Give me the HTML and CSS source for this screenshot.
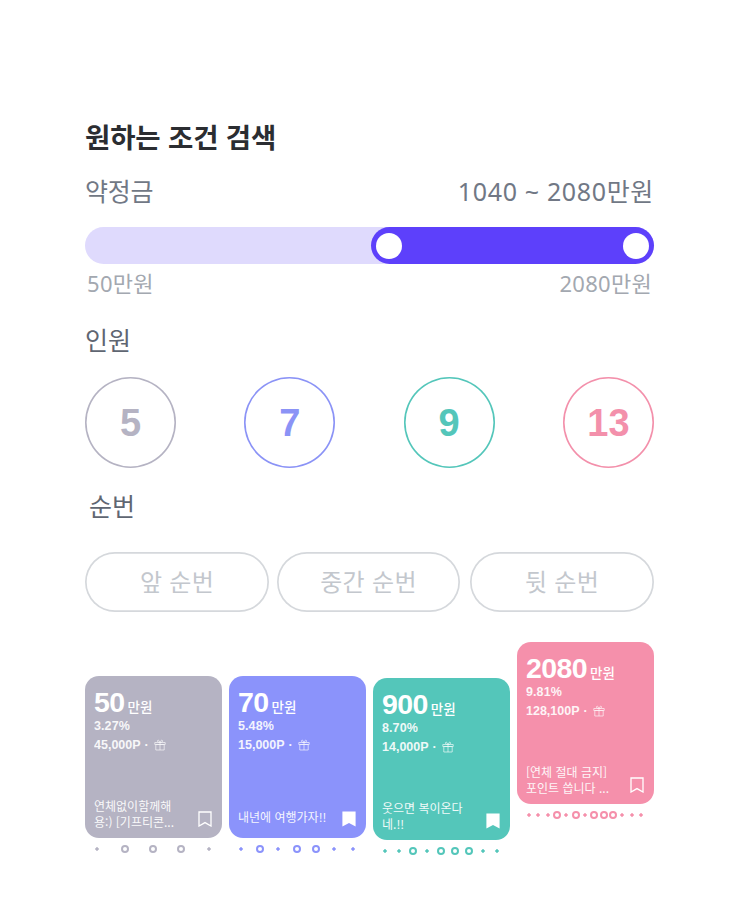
FILE: index.html
```html
<!DOCTYPE html>
<html lang="ko">
<head>
<meta charset="utf-8">
<title>원하는 조건 검색</title>
<link rel="stylesheet" href="styles.css">
</head>
<body>
<svg class="defs" width="0" height="0" aria-hidden="true">
  <symbol id="gift" viewBox="0 0 12 12"><path d="M.8 3.5h10.4v2H.8zM1.8 5.5h8.4V11H1.8zM6 3.5V11M6 3.5C4.5 3.5 3 2.8 3.5 1.6 4.1.6 5.6 1.6 6 3.5 6.4 1.6 7.9.6 8.5 1.6 9 2.8 7.5 3.5 6 3.5z" fill="none" stroke="currentColor" stroke-width=".7"/></symbol>
  <symbol id="mark" viewBox="0 0 14 16"><path d="M1 1h12v14L7 11.6 1 15z" fill="none" stroke="currentColor" stroke-width="1.3"/></symbol>
  <symbol id="mark-on" viewBox="0 0 14 16"><path d="M.4.4h13.2v15.2L7 12 .4 15.6z" fill="currentColor"/></symbol>
</svg>
<main class="page">
  <h1 class="title">원하는 조건 검색</h1>
  <div class="row-between range-head"><span>약정금</span><span class="range-value">1040 ~ 2080만원</span></div>
  <div class="slider">
    <div class="slider-active"><span class="knob"></span><span class="knob"></span></div>
  </div>
  <div class="row-between range-ends"><span>50만원</span><span>2080만원</span></div>

  <h2 class="label">인원</h2>
  <div class="row-between people">
    <div class="circle grey">5</div>
    <div class="circle blue">7</div>
    <div class="circle teal">9</div>
    <div class="circle pink">13</div>
  </div>

  <h2 class="label label-order">순번</h2>
  <div class="orders">
    <div class="pill pill-front">앞 순번</div>
    <div class="pill pill-mid">중간 순번</div>
    <div class="pill pill-front pill-back">뒷 순번</div>
  </div>

  <div class="cards">
    <article class="col col-1">
      <div class="card bg-grey">
        <div class="amount"><b>50</b><span>만원</span></div>
        <div class="meta rate">3.27%</div>
        <div class="meta points">45,000P <i>·</i> <svg class="gift"><use href="#gift"/></svg></div>
        <div class="foot"><p>연체없이함께해<br>용:) [기프티콘...</p><svg class="mark"><use href="#mark"/></svg></div>
      </div>
      <div class="dots c-grey"><s></s><u></u><u></u><u></u><s></s></div>
    </article>
    <article class="col col-1">
      <div class="card bg-blue">
        <div class="amount"><b>70</b><span>만원</span></div>
        <div class="meta rate">5.48%</div>
        <div class="meta points">15,000P <i>·</i> <svg class="gift"><use href="#gift"/></svg></div>
        <div class="foot"><p class="single">내년에 여행가자!!</p><svg class="mark"><use href="#mark-on"/></svg></div>
      </div>
      <div class="dots c-blue"><s></s><u></u><s></s><u></u><u></u><s></s><s></s></div>
    </article>
    <article class="col col-3">
      <div class="card bg-teal">
        <div class="amount"><b>900</b><span>만원</span></div>
        <div class="meta rate">8.70%</div>
        <div class="meta points">14,000P <i>·</i> <svg class="gift"><use href="#gift"/></svg></div>
        <div class="foot"><p>웃으면 복이온다<br>네.!!</p><svg class="mark"><use href="#mark-on"/></svg></div>
      </div>
      <div class="dots c-teal"><s></s><s></s><u></u><s></s><u></u><u></u><u></u><s></s><s></s></div>
    </article>
    <article class="col">
      <div class="card bg-pink">
        <div class="amount"><b>2080</b><span>만원</span></div>
        <div class="meta rate">9.81%</div>
        <div class="meta points">128,100P <i>·</i> <svg class="gift"><use href="#gift"/></svg></div>
        <div class="foot"><p>[연체 절대 금지]<br>포인트 씁니다 ...</p><svg class="mark"><use href="#mark"/></svg></div>
      </div>
      <div class="dots c-pink"><s></s><s></s><s></s><u></u><s></s><u></u><s></s><u></u><u></u><u></u><s></s><s></s><s></s></div>
    </article>
  </div>
</main>
</body>
</html>
```
FILE: styles.css
```css
* { box-sizing: border-box; }
html, body { margin: 0; background: #fff; }
body {
  width: 743px;
  height: 910px;
  overflow: hidden;
  font-family: "Noto Sans", "Noto Sans CJK KR", sans-serif;
}
.defs { position: absolute; }
.page { padding: 117px 89px 0 85px; }
.row-between { display: flex; justify-content: space-between; }

.title { margin: 0; font-size: 27.5px; line-height: 38px; font-weight: 700; color: #2b2d31; letter-spacing: -.15px; font-family: "Noto Sans CJK KR", sans-serif; }

.range-head { margin-top: 19px; font-size: 25px; line-height: 34px; color: #717885; font-weight: 400; letter-spacing: -.2px; }
.range-value { letter-spacing: .65px; }

.slider { margin-top: 19px; height: 37px; border-radius: 19px; background: #dfdafd; display: flex; justify-content: flex-end; }
.slider-active {
  width: 283px; height: 37px; border-radius: 19px; background: #5d40fb;
  display: flex; justify-content: space-between; align-items: center; padding: 0 5px;
}
.knob { width: 26px; height: 26px; border-radius: 50%; background: #fff; }

.range-ends { margin-top: 4px; padding: 0 2px; font-size: 22px; line-height: 30px; color: #a3a8b0; letter-spacing: .3px; }

.label { margin: 0; font-size: 25px; line-height: 34px; font-weight: 400; color: #5f6672; }
.range-ends + .label { margin-top: 25px; }
.label-order { margin-top: 21px; padding-left: 4px; }

.people { margin-top: 20px; }
.circle {
  width: 91px; height: 91px; border-radius: 50%; box-shadow: inset 0 0 0 1.6px currentColor;
  display: flex; align-items: center; justify-content: center; padding-top: 2px;
  font-family: "Liberation Sans", Arial, sans-serif; font-size: 38px; font-weight: 700;
}
.grey { color: #b5b3c3; }
.blue { color: #8b93f6; }
.teal { color: #54c6ba; }
.pink { color: #f390ab; }

.orders { margin-top: 29px; display: flex; gap: 8px; }
.pill {
  height: 60px; box-shadow: inset 0 0 0 1.7px #d5d8dc; border-radius: 30px;
  display: flex; align-items: center; justify-content: center; padding-bottom: 3px;
  font-family: "Noto Sans CJK KR", sans-serif;
  font-size: 24px; color: #c3c7cd; letter-spacing: .3px;
}
.pill-front { width: 184px; }
.pill-mid { width: 183px; }
.pill-back { margin-left: 2px; }

.cards { margin-top: 30px; display: grid; grid-template-columns: repeat(4, 137px); column-gap: 7px; align-items: start; }
.col-1 { margin-top: 34px; }
.col-3 { margin-top: 36px; }

.card {
  height: 162px; border-radius: 14px; color: #fff; padding: 9px 9px 8px;
  display: flex; flex-direction: column;
  font-family: "Liberation Sans", "Noto Sans CJK KR", sans-serif;
}
.bg-grey { background: #b5b3c3; }
.bg-blue { background: #8b93fb; }
.bg-teal { background: #54c6ba; }
.bg-pink { background: #f590ab; }

.amount { display: flex; align-items: baseline; gap: 3px; height: 33px; line-height: 34px; }
.amount b { font-size: 28.5px; font-weight: 700; letter-spacing: -.6px; }
.amount span { font-family: "Noto Sans CJK KR", sans-serif; font-size: 13.5px; font-weight: 500; }
.meta { font-size: 12.5px; font-weight: 700; opacity: .9; }
.rate { line-height: 17px; letter-spacing: .1px; }
.points { margin-top: 1px; line-height: 18px; display: flex; align-items: center; gap: 4px; }
.points i { font-style: normal; }
.gift { width: 12px; height: 12px; margin-left: 1px; }

.foot { margin-top: auto; display: flex; align-items: flex-end; justify-content: space-between; }
.foot p {
  margin: 0; font-family: "Noto Sans CJK KR", sans-serif; white-space: nowrap;
  font-size: 12px; line-height: 16px; opacity: .92;
}
.foot .single { margin-bottom: 5px; }
.mark { width: 14px; height: 16px; flex: none; margin-bottom: 3px; margin-right: 1px; }

.dots { display: flex; justify-content: space-between; align-items: center; margin: 7px 9px 0 8px; height: 8px; }
.dots s { width: 8px; height: 8px; background: radial-gradient(circle, currentColor 1.4px, transparent 2px); }
.dots u { width: 8px; height: 8px; border-radius: 50%; border: 2px solid currentColor; }
.c-grey { color: #b5b3c3; }
.c-blue { color: #8b93fb; }
.c-teal { color: #54c6ba; }
.c-pink { color: #f590ab; }
```
